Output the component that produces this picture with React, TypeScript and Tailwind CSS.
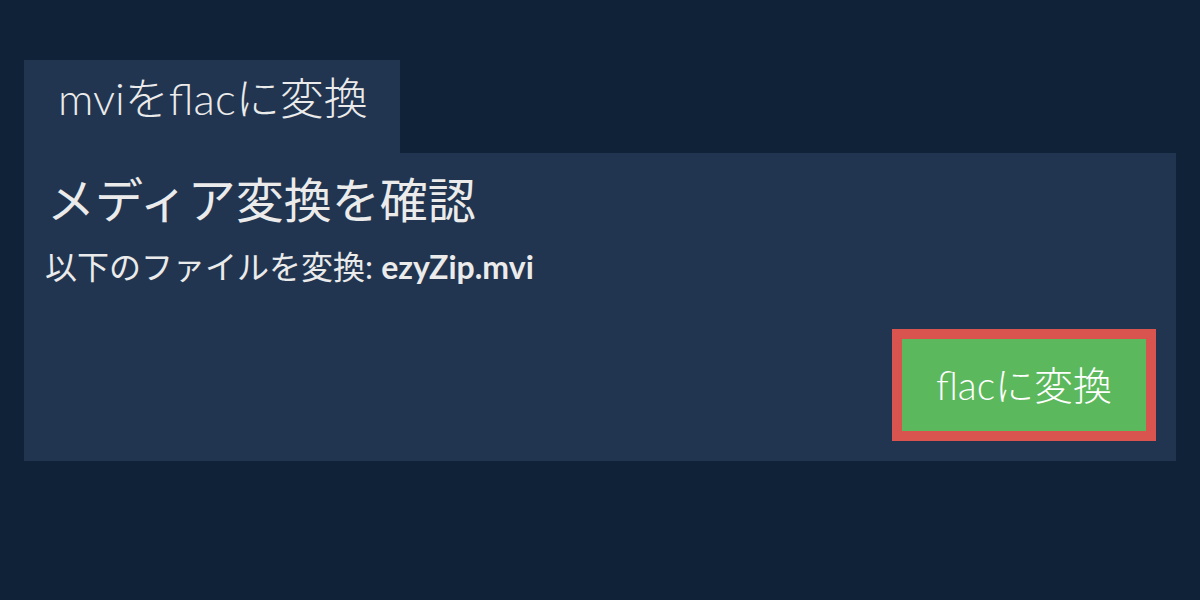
export default function App() {
  return (
    <div
      className="w-[1200px] h-[600px] bg-[#0f2238] px-6 pt-[60px] text-[#ebebeb]"
      style={{ fontFamily: 'Lato, "Noto Sans CJK JP", sans-serif' }}
    >
      <div className="inline-block h-[93px] bg-[#213550] pl-[34px] pr-[32px] pt-[16px] text-[44px] font-light leading-[44px]">
        mviをflacに変換
      </div>
      <div className="flex h-[308px] flex-col bg-[#213550] px-6 pb-5 pr-5">
        <h1 className="mt-[13px] -ml-[1px] text-[48px] leading-[68px]">メディア変換を確認</h1>
        <p className="mt-[15px] -ml-[3px] text-[32px] leading-[36px]">
          以下のファイルを変換: <span className="font-bold">ezyZip.mvi</span>
        </p>
        <div className="mt-auto flex justify-end">
          <button className="h-[112px] w-[264px] border-[10px] border-[#d9534f] bg-[#5cb85c] text-[39px] font-light text-white">
            flacに変換
          </button>
        </div>
      </div>
    </div>
  );
}
